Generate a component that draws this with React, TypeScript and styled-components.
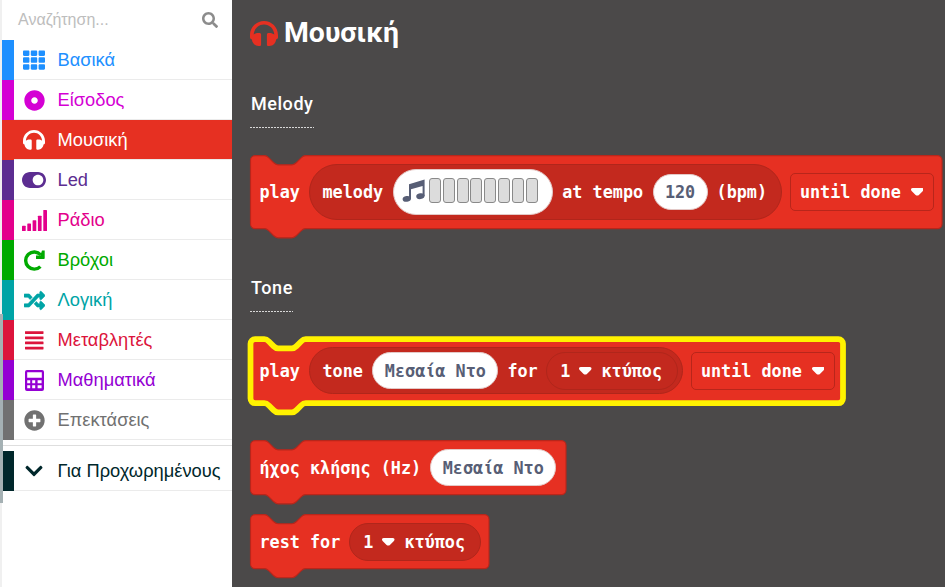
import React from 'react';
import styled, { createGlobalStyle } from 'styled-components';
import {
  FaTh, FaDotCircle, FaToggleOn, FaRandom, FaPlusCircle, FaChevronDown, FaSearch,
} from 'react-icons/fa';

const Global = createGlobalStyle`
  *, *::before, *::after { box-sizing: border-box; }
  html, body { margin: 0; overflow: hidden; background: #4b4949; }
  svg { display: block; }
`;

const Page = styled.div`
  display: flex;
  width: 945px;
  height: 587px;
  overflow: hidden;
  font-family: "Liberation Sans", Arial, sans-serif;
`;

/* ---------- toolbox ---------- */

const Toolbox = styled.nav`
  position: relative;
  flex: 0 0 232px;
  background: #fff;
  border-left: 2px solid #f0f0f0;
`;

const ScrollThumb = styled.div`
  position: absolute;
  left: -2px;
  top: 314px;
  width: 3px;
  height: 189px;
  background: #a5b1b4;
`;

const SearchBox = styled.div`
  display: flex;
  align-items: center;
  justify-content: space-between;
  height: 40px;
  padding: 0 14px 0 16px;
  color: #8c8c8c;
`;

const Placeholder = styled.span`
  font-size: 16px;
  color: #bdbdbd;
`;

const CategoryRow = styled.div<{ $color: string; $selected?: boolean }>`
  display: flex;
  align-items: center;
  height: 40px;
  border-left: 12px solid ${(p) => p.$color};
  background: linear-gradient(#ebebeb, #ebebeb) 0 100% / 100% 1px no-repeat
    ${(p) => (p.$selected ? p.$color : '#fff')};
  color: ${(p) => (p.$selected ? '#fff' : p.$color)};
`;

const CategoryIcon = styled.span`
  display: flex;
  justify-content: center;
  width: 40px;
  margin-right: 3.500px;
`;

const CategoryName = styled.span`
  font-size: 18.3px;
  line-height: 40px;
  white-space: nowrap;
`;

const Divider = styled.div`
  height: 11px;
  background: linear-gradient(#dedede, #dedede) 0 5px / 100% 1px no-repeat;
`;

/* ---------- flyout ---------- */

const Flyout = styled.main`
  flex: 1;
  min-width: 0;
  padding-left: 18px;
  background: #4b4949;
  color: #fff;
`;

const Title = styled.h1`
  display: flex;
  align-items: center;
  gap: 6px;
  height: 66px;
  margin: 0;
  font: bold 28.4px/66px Roboto, sans-serif;
  svg { color: #e63022; margin-top: 1px; }
`;

const GroupLabel = styled.h2<{ $width: number }>`
  width: ${(p) => p.$width}px;
  height: 49px;
  margin: 0;
  padding-left: 1px;
  font: 500 18px/50px Roboto, sans-serif;
  letter-spacing: 0.55px;
  white-space: nowrap;
  background: repeating-linear-gradient(90deg, #d8d8d8 0 2px, transparent 2px 3px) 0 48px / 100% 1px no-repeat;
`;

const Group = styled.section<{ $top: number; $gap: number }>`
  display: flex;
  flex-direction: column;
  padding-top: ${(p) => p.$top}px;
  h2 { margin-bottom: ${(p) => p.$gap}px; }
`;

const BlockBox = styled.div<{ $w: number; $h: number; $after?: number }>`
  position: relative;
  display: flex;
  align-items: center;
  width: ${(p) => p.$w}px;
  height: ${(p) => p.$h}px;
  margin-bottom: ${(p) => p.$after ?? 0}px;
  padding-left: 9.5px;
  font: bold 16.8px/20px "DejaVu Sans Mono", monospace;
`;

const BlockShape = styled.svg`
  position: absolute;
  left: 0;
  top: 0;
  overflow: visible;
`;

const Word = styled.span<{ $chars: number; $pad?: number }>`
  position: relative;
  flex: none;
  width: ${(p) => p.$chars * 10.1}px;
  margin-right: ${(p) => p.$pad ?? 0}px;
  white-space: pre;
`;

const Pill = styled.div<{ $w: number; $h: number }>`
  position: relative;
  flex: none;
  display: flex;
  align-items: center;
  width: ${(p) => p.$w}px;
  height: ${(p) => p.$h}px;
  padding-left: 12.600px;
  border: 1px solid #b0261b;
  border-radius: 999px;
  background: #c3291e;
`;

const DurationPill = styled(Pill)`
  padding-left: 13px;
  svg { margin: 0 9.500px 0 9px; }
`;

const Field = styled.div<{ $w: number; $h: number; $after?: number }>`
  position: relative;
  flex: none;
  display: flex;
  align-items: center;
  justify-content: center;
  width: ${(p) => p.$w}px;
  height: ${(p) => p.$h}px;
  margin-right: ${(p) => p.$after ?? 0}px;
  border: 1px solid #e3c9c7;
  border-radius: 999px;
  background: #fff;
  color: #575e75;
`;

const MelodyField = styled(Field)`
  padding: 0 1px 3px 0;
`;

const Dropdown = styled.div`
  position: relative;
  flex: none;
  display: flex;
  align-items: center;
  gap: 10px;
  width: 144px;
  height: 38px;
  margin-left: 8px;
  padding-left: 9px;
  border: 1px solid #b8261b;
  border-radius: 5px;
`;

const Cells = styled.div`
  display: flex;
  gap: 1.8px;
  margin: 0 5px 0 3px;
`;

const Cell = styled.span`
  width: 12px;
  height: 25px;
  border: 1px solid #898989;
  border-radius: 3px;
  background: #dcdcdc;
`;

/* ---------- icons ---------- */

function Caret() {
  return (
    <svg width="12.500" height="8" viewBox="0 0 12 8" preserveAspectRatio="none" fill="#fff">
      <path d="M1.600 0h8.800C11.600 0 12 .8 12 1.600c0 .6-.2 1-.6 1.400L7.600 6.900c-.9.9-2.300.9-3.200 0L.6 3C.2 2.600 0 2.200 0 1.600 0 .8.400 0 1.600 0z" />
    </svg>
  );
}

function NoteIcon() {
  return (
    <svg width="24" height="24" viewBox="0 0 24 24" fill="#575e75">
      <path d="M7 5.200 22.600.6V17h-2V7L9 10.300V20H7z" />
      <ellipse cx="4.800" cy="19.900" rx="4.200" ry="2.900" transform="rotate(-8 4.800 19.900)" />
      <ellipse cx="18.400" cy="17.200" rx="4.200" ry="2.900" transform="rotate(-8 18.400 17.200)" />
    </svg>
  );
}

function HeadphonesIcon({ size }: { size: number }) {
  return (
    <svg width={size} height={(size * 25) / 28} viewBox="0 0 28 25" fill="currentColor">
      <path d="M14 0C6.300 0 0 6.300 0 14v2.400c0 .7.400 1.300 1 1.600l.9.500C2.200 22.100 5 25 8.600 25H9.500c.9 0 1.600-.7 1.600-1.600V13.600c0-.9-.7-1.600-1.600-1.600H8.600c-2 0-3.700.5-4.900 1.600C4.100 7.900 8.500 3.600 14 3.600S23.900 7.900 24.300 13.600C23.100 12.500 21.400 12 19.400 12h-.9c-.9 0-1.600.7-1.600 1.600v9.800c0 .9.700 1.600 1.600 1.600h.9c3.600 0 6.400-2.900 6.700-6.500l.9-.5c.6-.3 1-.9 1-1.600V14C28 6.300 21.700 0 14 0z" />
    </svg>
  );
}

function SignalIcon() {
  return (
    <svg width="25" height="21" viewBox="0 0 25 21" fill="currentColor">
      <rect x="0" y="15.700" width="3.700" height="5.300" rx=".6" />
      <rect x="5.300" y="13.500" width="3.700" height="7.500" rx=".6" />
      <rect x="10.600" y="10.200" width="3.700" height="10.800" rx=".6" />
      <rect x="15.900" y="5.700" width="3.700" height="15.300" rx=".6" />
      <rect x="21.300" y="0" width="3.700" height="21" rx=".6" />
    </svg>
  );
}

function RepeatIcon() {
  return (
    <svg width="21" height="21" viewBox="0 0 21 21">
      <path d="M16.700 4.800A8.600 8.600 0 1 0 16.400 16.600" fill="none" stroke="currentColor" strokeWidth="3.400" />
      <path d="M20.700.6v7.700a.8.8 0 0 1-.8.800H12V5.600h4.300L18 .6z" fill="currentColor" />
    </svg>
  );
}

function LinesIcon() {
  return (
    <svg width="19" height="19" viewBox="0 0 19 19" fill="currentColor">
      <rect y=".2" width="18.500" height="2.800" rx=".4" />
      <rect y="5.400" width="18.500" height="2.800" rx=".4" />
      <rect y="10.500" width="18.500" height="2.800" rx=".4" />
      <rect y="15.700" width="18.500" height="2.800" rx=".4" />
    </svg>
  );
}

function CalculatorIcon() {
  return (
    <svg width="19" height="21" viewBox="0 0 19 21">
      <path
        fill="currentColor"
        fillRule="evenodd"
        d="M2 0h15a2 2 0 0 1 2 2v17a2 2 0 0 1-2 2H2a2 2 0 0 1-2-2V2a2 2 0 0 1 2-2zM2.200 2.200v5.600h14.600V2.200zM2.200 10.200v3h3v-3zM7.200 10.200v3h3v-3zM12.600 10.200v3h4v-3zM2.200 15.300v3h3v-3zM7.200 15.300v3h3v-3zM12.600 15.300v3h4v-3z"
      />
    </svg>
  );
}

/* ---------- blocks ---------- */

type BlockProps = {
  w: number;
  h: number;
  after?: number;
  selected?: boolean;
  children: React.ReactNode;
};

/* Statement block outline with a notch on top and a matching tab below. */
function Block({ w, h, after, selected, children }: BlockProps) {
  const s = 1.15;
  const W = (w - 0.5) / s;
  const H = (h - 1) / s;
  const d =
    `M0 4A4 4 0 0 1 4 0H12c2 0 3 1 4 2l4 4c1 1 2 2 4 2h12c2 0 3-1 4-2l4-4c1-1 2-2 4-2` +
    `H${W - 4}a4 4 0 0 1 4 4V${H - 4}a4 4 0 0 1-4 4H48c-2 0-3 1-4 2l-4 4c-1 1-2 2-4 2H24` +
    `c-2 0-3-1-4-2l-4-4c-1-1-2-2-4-2H4a4 4 0 0 1-4-4z`;
  return (
    <BlockBox $w={w} $h={h} $after={after}>
      <BlockShape width={w} height={h}>
        <g transform={`translate(.5 ${selected ? 1.2 : 0.6}) scale(${s})`}>
          <path
            d={d}
            fill="#e63022"
            stroke={selected ? '#fff200' : '#b8261b'}
            strokeWidth={selected ? 5 : 1}
          />
        </g>
      </BlockShape>
      {children}
    </BlockBox>
  );
}

function Duration() {
  return (
    <DurationPill $w={132} $h={38}>
      <Word $chars={1}>1</Word>
      <Caret />
      <Word $chars={6}>κτύπος</Word>
    </DurationPill>
  );
}

const categories = [
  { name: 'Βασικά', color: '#1e90ff', icon: <FaTh size={22} /> },
  { name: 'Είσοδος', color: '#d400d4', icon: <FaDotCircle size={21} /> },
  { name: 'Μουσική', color: '#e63022', icon: <HeadphonesIcon size={22} />, selected: true },
  { name: 'Led', color: '#5c2d91', icon: <FaToggleOn size={24} /> },
  { name: 'Ράδιο', color: '#e3008c', icon: <SignalIcon /> },
  { name: 'Βρόχοι', color: '#00aa00', icon: <RepeatIcon /> },
  { name: 'Λογική', color: '#00a4a6', icon: <FaRandom size={21} stroke="currentColor" strokeWidth={14} /> },
  { name: 'Μεταβλητές', color: '#dc143c', icon: <LinesIcon /> },
  { name: 'Μαθηματικά', color: '#9400d3', icon: <CalculatorIcon /> },
  { name: 'Επεκτάσεις', color: '#717171', icon: <FaPlusCircle size={21} /> },
];

export default function App() {
  return (
    <>
      <Global />
      <Page>
        <Toolbox>
          <SearchBox>
            <Placeholder>Αναζήτηση...</Placeholder>
            <FaSearch size={16} />
          </SearchBox>
          {categories.map((c) => (
            <CategoryRow key={c.name} $color={c.color} $selected={c.selected}>
              <CategoryIcon>{c.icon}</CategoryIcon>
              <CategoryName>{c.name}</CategoryName>
            </CategoryRow>
          ))}
          <Divider />
          <CategoryRow $color="#00272b">
            <CategoryIcon><FaChevronDown size={20} /></CategoryIcon>
            <CategoryName>Για Προχωρημένους</CategoryName>
          </CategoryRow>
          <ScrollThumb />
        </Toolbox>

        <Flyout>
          <Title>
            <HeadphonesIcon size={28} />
            Μουσική
          </Title>

          <Group $top={13} $gap={27}>
            <GroupLabel $width={64}>Melody</GroupLabel>
            <Block w={692} h={74}>
              <Word $chars={4} $pad={9}>play</Word>
              <Pill $w={473} $h={56}>
                <Word $chars={6} $pad={9.7}>melody</Word>
                <MelodyField $w={160} $h={46} $after={9.5}>
                  <NoteIcon />
                  <Cells>
                    {Array.from({ length: 8 }, (_, i) => <Cell key={i} />)}
                  </Cells>
                </MelodyField>
                <Word $chars={8} $pad={9.5}>at tempo</Word>
                <Field $w={55} $h={36} $after={9}>120</Field>
                <Word $chars={5}>(bpm)</Word>
              </Pill>
              <Dropdown>
                <Word $chars={10}>until done</Word>
                <Caret />
              </Dropdown>
            </Block>
          </Group>

          <Group $top={34} $gap={26}>
            <GroupLabel $width={43}>Tone</GroupLabel>
            <Block w={593} h={65} after={37} selected>
              <Word $chars={4} $pad={9}>play</Word>
              <Pill $w={374} $h={47}>
                <Word $chars={4} $pad={9.5}>tone</Word>
                <Field $w={126} $h={37} $after={9}>Μεσαία Ντο</Field>
                <Word $chars={3} $pad={8.7}>for</Word>
                <Duration />
              </Pill>
              <Dropdown>
                <Word $chars={10}>until done</Word>
                <Caret />
              </Dropdown>
            </Block>
            <Block w={316} h={55} after={19}>
              <Word $chars={16} $pad={9.2}>ήχος κλήσης (Hz)</Word>
              <Field $w={126} $h={37}>Μεσαία Ντο</Field>
            </Block>
            <Block w={239} h={55}>
              <Word $chars={8} $pad={9}>rest for</Word>
              <Duration />
            </Block>
          </Group>
        </Flyout>
      </Page>
    </>
  );
}
